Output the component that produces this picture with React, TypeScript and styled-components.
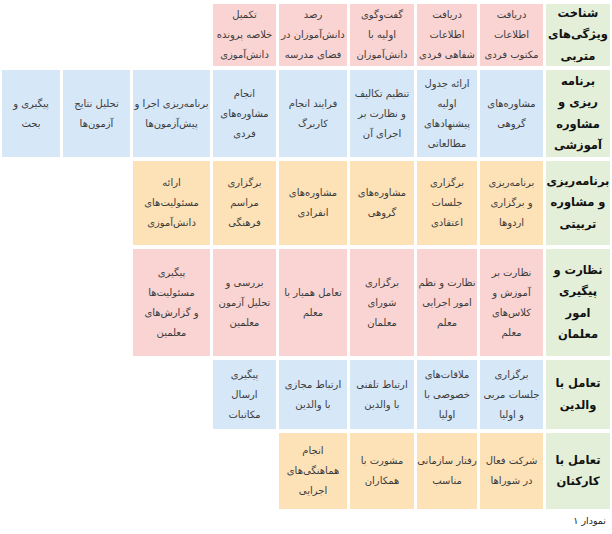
import React from "react";
import styled, { createGlobalStyle } from "styled-components";

const Global = createGlobalStyle`
  html, body { margin: 0; padding: 0; background: #ffffff; }
  body { font-family: "DejaVu Sans", sans-serif; }
`;

type Tone = "pink" | "blue" | "orange" | "green";

const tones: Record<Tone, string> = {
  pink: "#f9d4d3",
  blue: "#d6e7f7",
  orange: "#fde2b8",
  green: "#e3efd9",
};

const Page = styled.div`
  width: 612px;
  padding: 4px 2px 0 0;
  box-sizing: border-box;
  direction: rtl;
`;

const Chart = styled.div`
  display: grid;
  grid-template-columns: 64px 63px 60px 64px 68px 63px 77px 67px 58px;
  grid-template-rows: 62px 87px 84px 107px 69px 76px;
  column-gap: 3px;
  row-gap: 4px;
`;

const Cell = styled.div<{ $tone: Tone }>`
  background: ${(p) => tones[p.$tone]};
  display: flex;
  align-items: center;
  justify-content: center;
  text-align: center;
  white-space: pre-line;
  font-family: "DejaVu Sans", sans-serif;
  font-size: 10px;
  line-height: 20px;
  color: #3b3b3b;
`;

const Header = styled(Cell)`
  grid-column: 1;
  font-size: 11.5px;
  font-weight: bold;
  line-height: 21.5px;
  color: #111;
`;

const Caption = styled.div`
  margin-top: 6px;
  padding-right: 4px;
  font-family: "DejaVu Sans", sans-serif;
  font-size: 9.5px;
  color: #222;
  text-align: right;
`;

type Row = { head: string; tone: Tone; cells: string[] };

const rows: Row[] = [
  {
    head: "شناخت\nویژگی‌های\nمتربی",
    tone: "pink",
    cells: [
      "دریافت\nاطلاعات\nمکتوب فردی",
      "دریافت\nاطلاعات\nشفاهی فردی",
      "گفت‌وگوی\nاولیه با\nدانش‌آموزان",
      "رصد\nدانش‌آموزان در\nفضای مدرسه",
      "تکمیل\nخلاصه پرونده\nدانش‌آموزی",
    ],
  },
  {
    head: "برنامه\nریزی و\nمشاوره\nآموزشی",
    tone: "blue",
    cells: [
      "مشاوره‌های\nگروهی",
      "ارائه جدول\nاولیه\nپیشنهادهای\nمطالعاتی",
      "تنظیم تکالیف\nو نظارت بر\nاجرای آن",
      "فرایند انجام\nکاربرگ",
      "انجام\nمشاوره‌های\nفردی",
      "برنامه‌ریزی اجرا و\nپیش‌آزمون‌ها",
      "تحلیل نتایج\nآزمون‌ها",
      "پیگیری و\nبحث",
    ],
  },
  {
    head: "برنامه‌ریزی\nو مشاوره\nتربیتی",
    tone: "orange",
    cells: [
      "برنامه‌ریزی\nو برگزاری\nاردوها",
      "برگزاری\nجلسات\nاعتقادی",
      "مشاوره‌های\nگروهی",
      "مشاوره‌های\nانفرادی",
      "برگزاری\nمراسم\nفرهنگی",
      "ارائه\nمسئولیت‌های\nدانش‌آموزی",
    ],
  },
  {
    head: "نظارت و\nپیگیری\nامور\nمعلمان",
    tone: "pink",
    cells: [
      "نظارت بر\nآموزش و\nکلاس‌های\nمعلم",
      "نظارت و نظم\nامور اجرایی\nمعلم",
      "برگزاری\nشورای\nمعلمان",
      "تعامل همیار با\nمعلم",
      "بررسی و\nتحلیل آزمون\nمعلمین",
      "پیگیری\nمسئولیت‌ها\nو گزارش‌های\nمعلمین",
    ],
  },
  {
    head: "تعامل با\nوالدین",
    tone: "blue",
    cells: [
      "برگزاری\nجلسات مربی\nو اولیا",
      "ملاقات‌های\nخصوصی با\nاولیا",
      "ارتباط تلفنی\nبا والدین",
      "ارتباط مجازی\nبا والدین",
      "پیگیری\nارسال\nمکاتبات",
    ],
  },
  {
    head: "تعامل با\nکارکنان",
    tone: "orange",
    cells: [
      "شرکت فعال\nدر شوراها",
      "رفتار سازمانی\nمناسب",
      "مشورت با\nهمکاران",
      "انجام\nهماهنگی‌های\nاجرایی",
    ],
  },
];

export default function App() {
  return (
    <Page>
      <Global />
      <Chart>
        {rows.map((r, i) => (
          <React.Fragment key={i}>
            <Header $tone="green">{r.head}</Header>
            {r.cells.map((c, j) => (
              <Cell key={j} $tone={r.tone}>
                {c}
              </Cell>
            ))}
          </React.Fragment>
        ))}
      </Chart>
      <Caption>نمودار ۱</Caption>
    </Page>
  );
}
